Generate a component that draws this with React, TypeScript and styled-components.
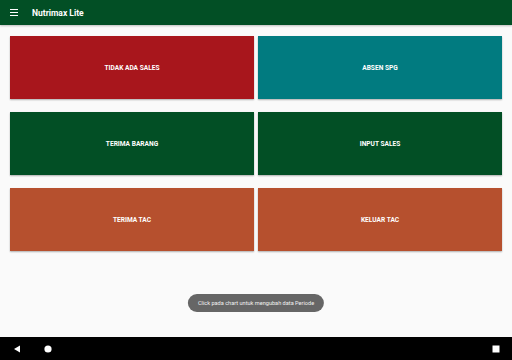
import React from 'react';
import styled, { createGlobalStyle } from 'styled-components';

const GlobalStyle = createGlobalStyle`
  html, body {
    margin: 0;
    padding: 0;
    background: #fafafa;
    font-family: Roboto, "Liberation Sans", sans-serif;
  }
`;

type MenuItem = {
  label: string;
  color: string;
};

const menu: MenuItem[] = [
  { label: 'TIDAK ADA SALES', color: '#a8161c' },
  { label: 'ABSEN SPG', color: '#017b80' },
  { label: 'TERIMA BARANG', color: '#024f25' },
  { label: 'INPUT SALES', color: '#024f25' },
  { label: 'TERIMA TAC', color: '#b6502e' },
  { label: 'KELUAR TAC', color: '#b6502e' },
];

const App = () => {
  return (
    <Screen>
      <GlobalStyle />
      <AppBar>
        <MenuIcon>
          <span />
          <span />
          <span />
        </MenuIcon>
        <Title>Nutrimax Lite</Title>
      </AppBar>

      <Content>
        <Grid>
          {menu.map((item) => (
            <Tile key={item.label} $bg={item.color}>
              {item.label}
            </Tile>
          ))}
        </Grid>
        <Toast>Click pada chart untuk mengubah data Periode</Toast>
      </Content>

      <NavBar>
        <NavLeft>
          <svg width="8" height="8" viewBox="0 0 8 8">
            <path d="M7 0.5 L7 7.5 L1 4 Z" fill="#fff" />
          </svg>
          <svg width="8" height="8" viewBox="0 0 8 8">
            <circle cx="4" cy="4" r="3.6" fill="#fff" />
          </svg>
        </NavLeft>
        <svg width="8" height="8" viewBox="0 0 8 8">
          <rect x="0.5" y="0.5" width="7" height="7" fill="#fff" />
        </svg>
      </NavBar>
    </Screen>
  );
};

const Screen = styled.div`
  width: 512px;
  height: 360px;
  display: flex;
  flex-direction: column;
  background: #fafafa;
  overflow: hidden;
`;

const AppBar = styled.div`
  height: 25px;
  flex-shrink: 0;
  background: #024f25;
  display: flex;
  align-items: center;
  padding-left: 10px;
  box-shadow: 0 1px 2px rgba(0, 0, 0, 0.25);
  position: relative;
  z-index: 1;
`;

const MenuIcon = styled.div`
  width: 8px;
  display: flex;
  flex-direction: column;
  gap: 1.5px;
  margin-right: 14px;

  span {
    display: block;
    height: 1.2px;
    background: #fff;
  }
`;

const Title = styled.div`
  color: #fff;
  font-size: 8.5px;
  font-weight: 700;
`;

const Content = styled.div`
  flex: 1;
  position: relative;
  padding: 11px 10px 0 10px;
`;

const Grid = styled.div`
  display: grid;
  grid-template-columns: 1fr 1fr;
  grid-auto-rows: 63px;
  column-gap: 4px;
  row-gap: 13px;
`;

const Tile = styled.div<{ $bg: string }>`
  background: ${(p) => p.$bg};
  color: #fff;
  font-size: 6.6px;
  font-weight: 700;
  display: flex;
  align-items: center;
  justify-content: center;
  box-shadow: 0 1px 1.5px rgba(0, 0, 0, 0.3);
`;

const Toast = styled.div`
  position: absolute;
  left: 50%;
  bottom: 25px;
  transform: translateX(-50%);
  height: 18px;
  padding: 0 10px;
  border-radius: 9px;
  background: #666666;
  color: #f2f2f2;
  font-size: 5.6px;
  display: flex;
  align-items: center;
  white-space: nowrap;
`;

const NavBar = styled.div`
  height: 23px;
  flex-shrink: 0;
  background: #000;
  display: flex;
  align-items: center;
  justify-content: space-between;
  padding: 0 12px 0 13px;
`;

const NavLeft = styled.div`
  display: flex;
  align-items: center;
  gap: 23px;
`;

export default App;
